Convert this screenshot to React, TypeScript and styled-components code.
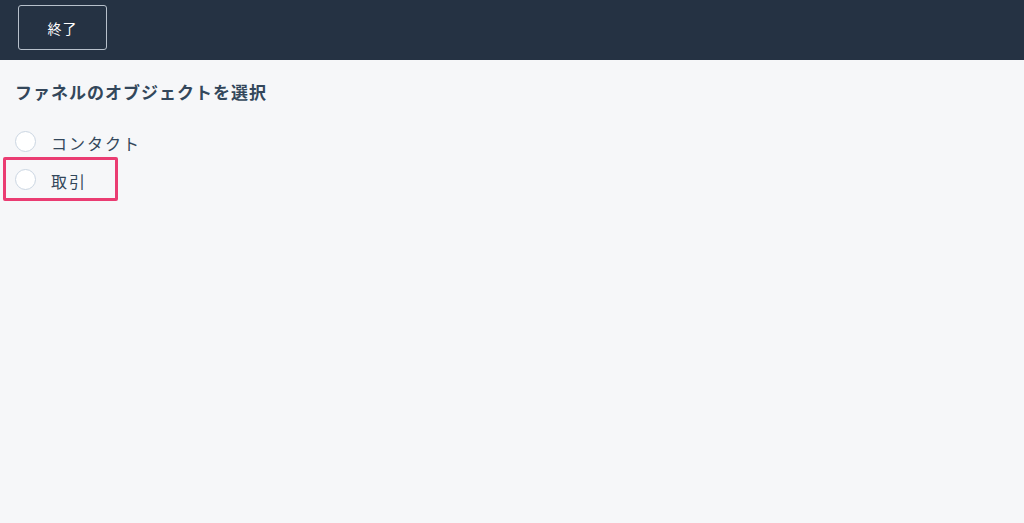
import React, {useState} from 'react';
import styled, {createGlobalStyle} from 'styled-components';

const GlobalStyle = createGlobalStyle`
  html, body {
    margin: 0;
    padding: 0;
    background: #f5f8fa;
  }
  body {
    font-family: "Noto Sans CJK JP", "Noto Sans", sans-serif;
    color: #33475b;
  }
`;

const Page = styled.div`
  width: 1024px;
  height: 523px;
  background: #f6f7f9;
  overflow: hidden;
`;

const Header = styled.div`
  display: flex;
  align-items: center;

  height: 60px;
  padding: 0 18px;
  box-sizing: border-box;

  background: #253243;
`;

const ExitButton = styled.button`
  display: flex;
  justify-content: center;
  align-items: center;

  width: 89px;
  height: 45px;
  margin-top: -5px;

  border: 1px solid #b7c0cb;
  border-radius: 3px;
  background: transparent;

  color: #ffffff;
  font-family: "Noto Sans CJK JP", sans-serif;
  font-size: 14px;
  letter-spacing: 1px;
  cursor: pointer;
`;

const Body = styled.div`
  padding: 20px 15px;
`;

const Title = styled.h2`
  margin: 0 0 28px;

  font-size: 17px;
  font-weight: 700;
  line-height: 24px;
  letter-spacing: 1px;
  color: #33475b;
`;

const Options = styled.div`
  display: flex;
  flex-direction: column;
  gap: 16px;
`;

const OptionRow = styled.label`
  position: relative;
  display: flex;
  align-items: center;
  gap: 15px;

  height: 22px;

  font-size: 16px;
  letter-spacing: 2px;
  color: #33475b;
  cursor: pointer;
`;

type CircleProps = {
    checked: boolean;
}
const RadioCircle = styled.span<CircleProps>`
  display: inline-block;
  box-sizing: border-box;
  flex-shrink: 0;

  width: 21px;
  height: 21px;
  margin-top: -4px;

  border: 1px solid #cbd6e2;
  border-radius: 50%;
  background: #ffffff;
  box-shadow: ${(props) => props.checked ? 'inset 0 0 0 5px #00a4bd' : 'none'};
`;

const Highlight = styled.span`
  position: absolute;
  left: -12px;
  top: -13px;

  width: 115px;
  height: 44px;
  box-sizing: border-box;

  border: 3px solid #ea3c72;
  border-radius: 2px;
  pointer-events: none;
`;

const options = [
    {key: 'contact', label: 'コンタクト', highlighted: false},
    {key: 'deal', label: '取引', highlighted: true},
];

const App: React.FC = () => {
    const [selected, setSelected] = useState<string | null>(null);

    return (
        <Page>
            <GlobalStyle/>
            <Header>
                <ExitButton>終了</ExitButton>
            </Header>
            <Body>
                <Title>ファネルのオブジェクトを選択</Title>
                <Options>
                    {options.map((option) => (
                        <OptionRow key={option.key} onClick={() => setSelected(option.key)}>
                            <RadioCircle checked={selected === option.key}/>
                            {option.label}
                            {option.highlighted && <Highlight/>}
                        </OptionRow>
                    ))}
                </Options>
            </Body>
        </Page>
    );
};

export default App;
